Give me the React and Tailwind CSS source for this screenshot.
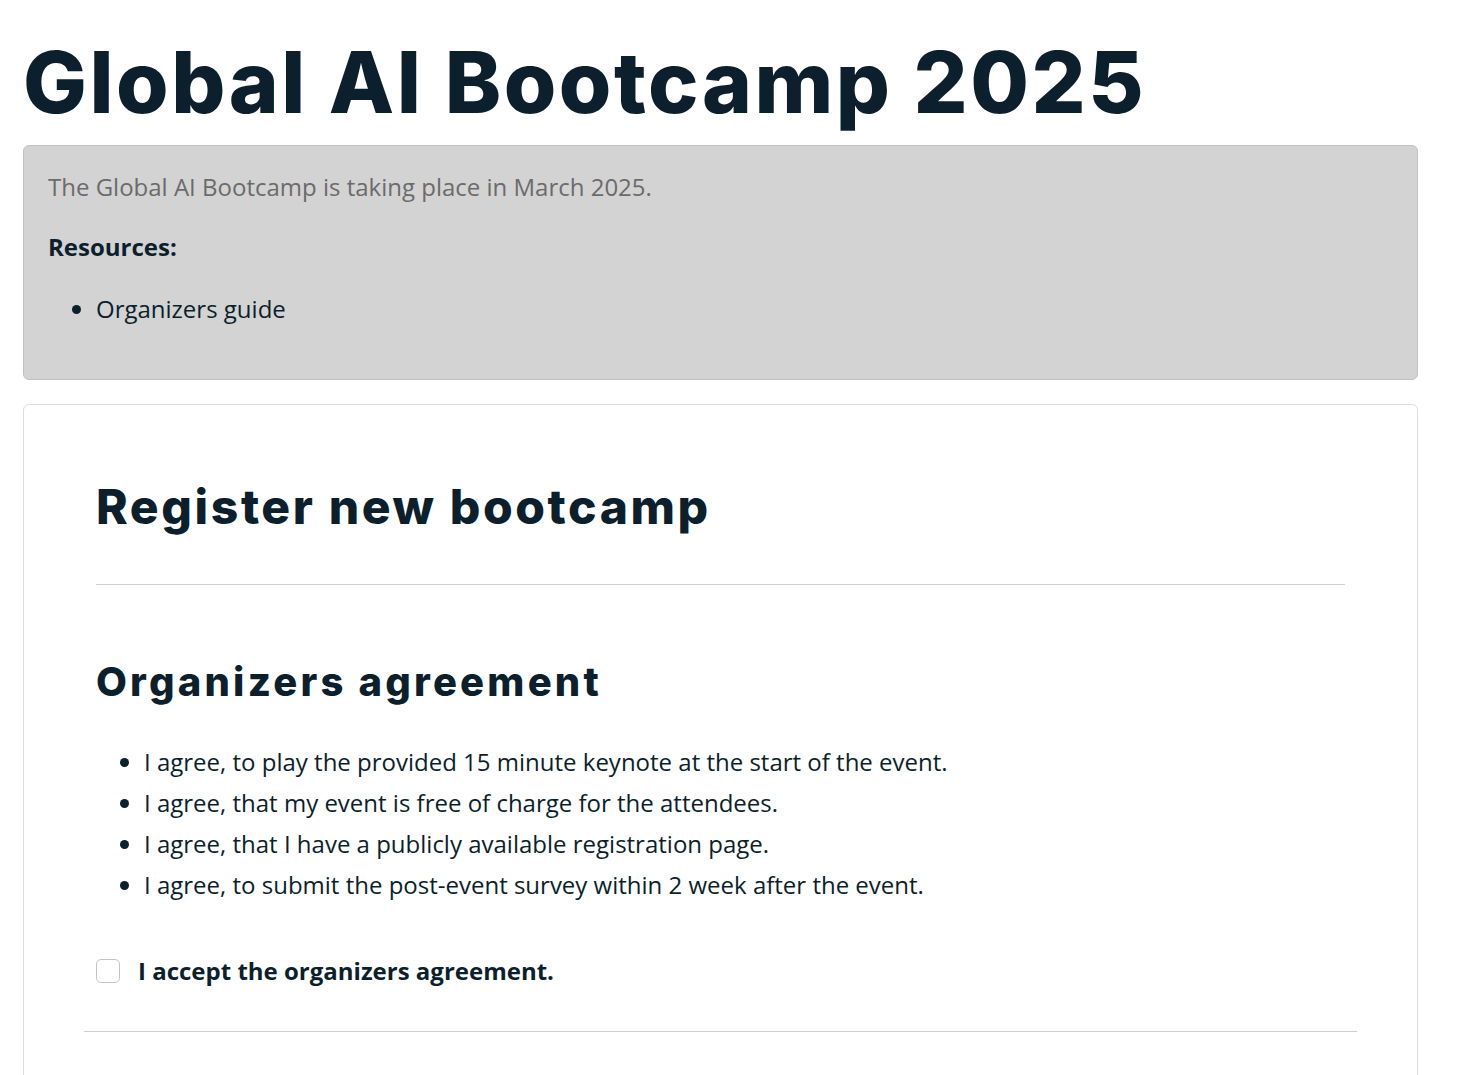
import { useState } from "react";

const heading = "font-['Inter',sans-serif] font-extrabold text-[#0b1f2c]";
const body = "font-['Open_Sans','Noto_Sans',sans-serif]";

const agreementItems = [
  "I agree, to play the provided 15 minute keynote at the start of the event.",
  "I agree, that my event is free of charge for the attendees.",
  "I agree, that I have a publicly available registration page.",
  "I agree, to submit the post-event survey within 2 week after the event.",
];

export default function App() {
  const [accepted, setAccepted] = useState(false);

  return (
    <div className={`min-h-screen bg-white ${body} text-[#0b1f2c]`}>
      <div className="ml-[23px] w-[1395px]">
        <h1 className={`${heading} pt-[33px] text-[85px] leading-[100px] tracking-[2.5px]`}>
          Global AI Bootcamp 2025
        </h1>

        <div className="mt-[12px] rounded-md border border-[#c2c2c2] bg-[#d3d3d3] px-6 pt-[23px] pb-[52px] text-[24px] leading-[36px]">
          <p className="text-[#6b6b6b]">The Global AI Bootcamp is taking place in March 2025.</p>
          <p className="mt-[24px] font-bold">Resources:</p>
          <ul className="mt-[26px] list-disc pl-[48px]">
            <li>Organizers guide</li>
          </ul>
        </div>

        <div className="mt-[24px] rounded-md border border-[#dcdcdc] px-[60px] pt-[72px] pb-[60px]">
          <div className="px-3">
            <h2 className={`${heading} text-[48px] leading-[60px] tracking-[2.6px]`}>Register new bootcamp</h2>
            <hr className="mt-[47px] border-[#cfcfcf]" />
            <h3 className={`${heading} mt-[72px] text-[40px] leading-[50px] tracking-[3.2px]`}>
              Organizers agreement
            </h3>
            <ul className="mt-[34px] list-disc pl-[48px] text-[24px] leading-[41px]">
              {agreementItems.map((item) => (
                <li key={item}>{item}</li>
              ))}
            </ul>
            <label className="mt-[50px] flex cursor-pointer items-center gap-[18px] text-[24px] font-bold leading-[32px]">
              <input
                type="checkbox"
                checked={accepted}
                onChange={(e) => setAccepted(e.target.checked)}
                className="h-6 w-6 appearance-none rounded-[5px] border border-[#c4c4c4] bg-white checked:bg-[#0b1f2c]"
              />
              I accept the organizers agreement.
            </label>
          </div>
          <hr className="mt-[44px] border-[#cfcfcf]" />
        </div>
      </div>
    </div>
  );
}
